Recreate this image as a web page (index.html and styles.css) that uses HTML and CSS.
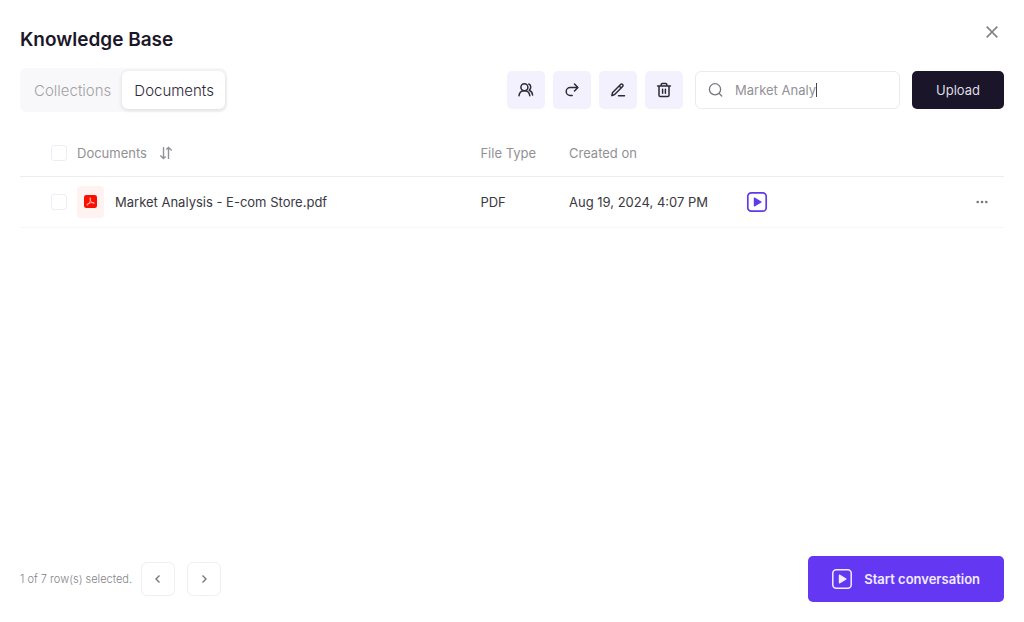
FILE: index.html
```html
<!DOCTYPE html>
<html lang="en">
<head>
<meta charset="utf-8">
<meta name="viewport" content="width=device-width, initial-scale=1">
<title>Knowledge Base</title>
<link rel="stylesheet" href="styles.css">
</head>
<body>
<main class="page">
  <header class="header">
    <h1 class="title">Knowledge Base</h1>
    <button class="close" type="button" aria-label="Close">
      <svg width="14" height="14" viewBox="0 0 14 14" fill="none" stroke="currentColor" stroke-width="1.7"><path d="M1.7 1.7l10.6 10.6M12.3 1.7L1.7 12.3"/></svg>
    </button>
  </header>

  <div class="toolbar">
    <div class="tabs" role="tablist">
      <button class="tab" type="button" role="tab" aria-selected="false">Collections</button>
      <button class="tab tab-active" type="button" role="tab" aria-selected="true">Documents</button>
    </div>
    <div class="actions">
      <button class="tool" type="button" aria-label="Share with people">
        <svg class="icon" width="16" height="16" viewBox="0 0 16 16"><circle cx="6.4" cy="5.2" r="3.5"/><path d="M1 13.8c.3-3 2.300-5.100 5.400-5.100s5.100 2.100 5.400 5.100M10.800 2c2.300.9 2.700 4.500.500 6.200 2 .9 3 2.600 3.300 4.800"/></svg>
      </button>
      <button class="tool" type="button" aria-label="Move">
        <svg class="icon" width="16" height="16" viewBox="0 0 16 16"><path d="M10.500 2l3.400 3.500L10.500 9M13.600 5.500H6.200a4 4 0 0 0 0 8h2"/></svg>
      </button>
      <button class="tool" type="button" aria-label="Rename">
        <svg class="icon" width="16" height="16" viewBox="0 0 16 16"><path d="M1.800 13.600l.8-3.100 8-8c.6-.6 1.400-.6 2 0s.6 1.400 0 2l-8 8zM9.200 4l2 2M8.500 13.800h6"/></svg>
      </button>
      <button class="tool" type="button" aria-label="Delete">
        <svg class="icon" width="16" height="16" viewBox="0 0 16 16"><path d="M1.600 4h12.800M5.200 3.800V2.400c0-.6.400-1 1-1h3.600c.6 0 1 .4 1 1v1.400M3 4v9.200c0 .8.500 1.300 1.300 1.300h7.400c.8 0 1.300-.5 1.300-1.300V4M6.600 7.200v4M9.400 7.200v4"/></svg>
      </button>
      <label class="search">
        <svg class="search-icon" width="16" height="16" viewBox="0 0 16 16" fill="none" stroke="currentColor" stroke-width="1.3" stroke-linecap="round"><circle cx="7" cy="7.3" r="5.6"/><path d="M11.100 11.400l2.600 2.600"/></svg>
        <input class="search-input" type="text" value="Market Analy" aria-label="Search documents">
        <span class="caret"></span>
      </label>
      <button class="upload" type="button">Upload</button>
    </div>
  </div>

  <table class="files">
    <colgroup><col class="col-check"><col class="col-name"><col class="col-type"><col class="col-date"><col><col class="col-menu"></colgroup>
    <thead>
      <tr>
        <th class="check-cell"><input class="check" type="checkbox" aria-label="Select all documents"></th>
        <th><button class="sort" type="button">Documents
          <svg width="14" height="14" viewBox="0 0 14 14" fill="none" stroke="currentColor" stroke-width="1.4"><path d="M4.500 1v11.500M1.300 9.400l3.200 3.200 2.200-2.200M9.500 13V1.500M12.700 4.600L9.500 1.400 7.300 3.600"/></svg></button></th>
        <th>File Type</th>
        <th>Created on</th>
        <th></th>
        <th></th>
      </tr>
    </thead>
    <tbody>
      <tr>
        <td class="check-cell"><input class="check" type="checkbox" aria-label="Select Market Analysis - E-com Store.pdf"></td>
        <td>
          <div class="file">
            <span class="badge">
              <svg width="13" height="13" viewBox="0 0 14 14"><rect width="14" height="14" rx="2.5" fill="#fa0f00"/><path d="M6.700 3c.8 0 .4 3-.8 5.100-1 1.800-2.200 3-2.800 2.700-.6-.5 1.700-2 4.200-2.500 2.100-.4 4-.2 3.800.4-.3.800-2.900-.4-3.900-2.200C6.400 5.100 6.100 3 6.700 3z" fill="none" stroke="#ffd5d2" stroke-width=".8"/></svg>
            </span>
            <span>Market Analysis - E-com Store.pdf</span>
          </div>
        </td>
        <td>PDF</td>
        <td>Aug 19, 2024, 4:07 PM</td>
        <td>
          <button class="play" type="button" aria-label="Start conversation with this document">
            <svg width="22" height="22" viewBox="0 0 22 22"><rect x="1.800" y="1.800" width="18.400" height="18.400" rx="3.500" fill="none" stroke="currentColor" stroke-width="1.700"/><path d="M7.800 7.200v7.600c0 .5.500.8.900.6l6.600-3.800c.4-.3.400-.9 0-1.200L8.700 6.600c-.4-.2-.9.100-.9.600z" fill="currentColor"/></svg>
          </button>
        </td>
        <td class="menu-cell">
          <button class="more" type="button" aria-label="More options">
            <svg width="14" height="4" viewBox="0 0 14 4" fill="currentColor"><circle cx="2.700" cy="2" r="1.300"/><circle cx="7" cy="2" r="1.300"/><circle cx="11.300" cy="2" r="1.300"/></svg>
          </button>
        </td>
      </tr>
    </tbody>
  </table>

  <footer class="footer">
    <div class="pager">
      <span class="count">1 of 7 row(s) selected.</span>
      <button class="page-button" type="button" aria-label="Previous page">
        <svg width="10" height="10" viewBox="0 0 10 10"><path d="M6.500 1.500L3 5l3.500 3.500"/></svg>
      </button>
      <button class="page-button" type="button" aria-label="Next page">
        <svg width="10" height="10" viewBox="0 0 10 10"><path d="M3.500 1.500L7 5 3.500 8.500"/></svg>
      </button>
    </div>
    <button class="start" type="button">
      <svg width="22" height="22" viewBox="0 0 22 22"><rect x="1.800" y="1.800" width="18.400" height="18.400" rx="3.500" fill="none" stroke="currentColor" stroke-width="1.500"/><path d="M7.800 7.200v7.600c0 .5.500.8.900.6l6.600-3.800c.4-.3.400-.9 0-1.200L8.700 6.600c-.4-.2-.9.100-.9.600z" fill="currentColor"/></svg>
      Start conversation
    </button>
  </footer>
</main>
</body>
</html>
```
FILE: styles.css
```css
*, *::before, *::after { box-sizing: border-box; }

body {
  margin: 0;
  background: #fff;
  color: #3a3840;
  font-family: Inter, "Liberation Sans", sans-serif;
  font-size: 13px;
  line-height: 20px;
}

button, input { font: inherit; color: inherit; }

button {
  display: inline-flex;
  align-items: center;
  justify-content: center;
  margin: 0;
  padding: 0;
  border: 0;
  background: none;
  cursor: pointer;
}

svg { display: block; flex: none; }

.page {
  display: flex;
  flex-direction: column;
  min-height: 100vh;
  padding: 20px;
}

.header {
  display: flex;
  align-items: flex-start;
  justify-content: space-between;
  padding-bottom: 14px;
}

.title {
  margin: 6px 0 0;
  color: #1b1728;
  font-size: 19px;
  font-weight: 600;
  line-height: 28px;
}

.close { width: 24px; height: 24px; color: #858489; }

.toolbar {
  display: flex;
  align-items: center;
  justify-content: space-between;
}

.tabs {
  display: flex;
  padding: 3px 2px;
  border-radius: 7px;
  background: #f8f8fa;
}

.tab {
  height: 38px;
  padding: 2px 11px 0 12px;
  border-radius: 6px;
  color: #a3a2a6;
  font-size: 15px;
  font-weight: 300;
}

.tab-active {
  background: #fff;
  color: #2c2938;
  box-shadow: 0 1px 4px rgba(27, 23, 40, 0.14);
}

.actions { display: flex; gap: 8px; }

.tool {
  width: 38px;
  height: 38px;
  border-radius: 5px;
  background: #f3f1fe;
  color: #2c2938;
}

.icon {
  fill: none;
  stroke: currentColor;
  stroke-width: 1.5;
  stroke-linecap: round;
  stroke-linejoin: round;
}

.search {
  display: flex;
  align-items: center;
  width: 205px;
  height: 38px;
  margin: 0 4px;
  padding: 0 12px;
  border: 1px solid #ebebef;
  border-radius: 6px;
  color: #929196;
}

.search-icon { margin-right: 11px; color: #77767b; }

.search-input {
  field-sizing: content;
  max-width: 140px;
  padding: 0;
  border: 0;
  outline: 0;
  background: none;
}

.caret { width: 1px; height: 14px; background: #45434c; }

.upload {
  padding: 0 24px;
  border-radius: 5px;
  background: #1a1529;
  color: #dedde2;
}

.files {
  width: 100%;
  margin-top: 19px;
  border-collapse: collapse;
  table-layout: fixed;
}

.col-check { width: 57px; }
.col-name { width: 41%; }
.col-type { width: 9%; }
.col-date { width: 18%; }
.col-menu { width: 48px; }

.files th, .files td {
  padding: 0;
  text-align: left;
  font-weight: 400;
  white-space: nowrap;
}

.files th { height: 45px; color: #929196; }
.files td { height: 51px; }
.files thead tr { border-bottom: 1px solid #eeeef1; }
.files tbody tr { border-bottom: 1px solid #f7f7f9; }

.files .check-cell { padding-left: 31px; }

.check {
  display: block;
  appearance: none;
  width: 16px;
  height: 16px;
  margin: 0;
  border: 1px solid #eeecf5;
  border-radius: 3px;
  background: #fff;
}

.sort { gap: 12px; }

.file { display: flex; align-items: center; gap: 11px; }

.badge {
  display: grid;
  place-items: center;
  width: 27px;
  height: 32px;
  border-radius: 4px;
  background: #fff3f2;
}

.play { display: flex; color: #6039ec; }

.files .menu-cell { padding-right: 15px; }
.more { display: flex; width: 14px; height: 20px; margin-left: auto; color: #77767b; }

.footer {
  display: flex;
  align-items: center;
  justify-content: space-between;
  margin-top: auto;
}

.pager { display: flex; align-items: center; gap: 12px; }

.count { margin-right: -3px; color: #858489; font-size: 11px; font-weight: 300; }

.page-button {
  width: 34px;
  height: 34px;
  border: 1px solid #efeff4;
  border-radius: 6px;
  color: #77767b;
}

.page-button svg { fill: none; stroke: currentColor; stroke-width: 1.4; }

.start {
  gap: 11px;
  height: 46px;
  padding: 0 24px 0 23px;
  border-radius: 5px;
  background: #6438f3;
  color: #f1edff;
  font-weight: 600;
}
```
